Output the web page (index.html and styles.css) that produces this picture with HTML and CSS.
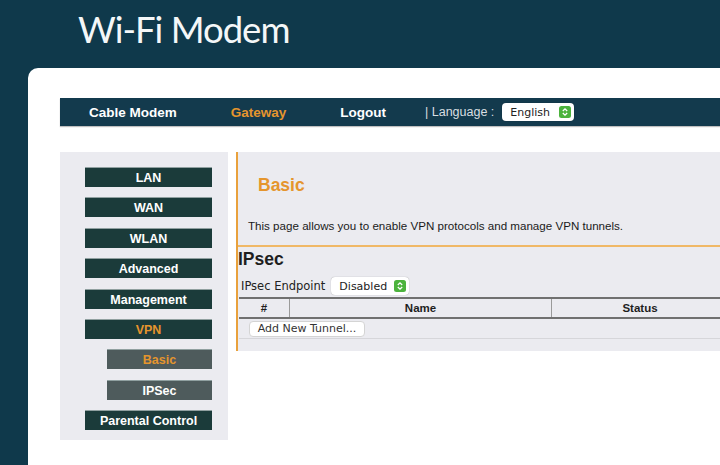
FILE: index.html
```html
<!DOCTYPE html>
<html lang="en">
<head>
  <meta charset="UTF-8">
  <title>Wi-Fi Modem</title>
  <link rel="stylesheet" href="styles.css">
</head>
<body>

  <!-- Page header -->
  <div class="header">
    <h1>Wi-Fi Modem</h1>
  </div>

  <!-- Main card -->
  <div class="card">

    <!-- Top navigation -->
    <div class="topnav">
      <a href="#" class="nav-item">Cable Modem</a>
      <a href="#" class="nav-item active">Gateway</a>
      <a href="#" class="nav-item">Logout</a>
      <span class="lang-label">| Language :</span>
      <span class="select-box lang-select">
        English
        <svg class="select-arrow" viewBox="0 0 12 12" width="12" height="12">
          <rect x="0" y="0" width="12" height="12" rx="2.5" fill="#4cb33d"/>
          <path d="M3.8 5 L6 2.9 L8.2 5 M3.8 7 L6 9.1 L8.2 7" fill="none" stroke="#fff" stroke-width="1.3"/>
        </svg>
      </span>
    </div>

    <div class="main">
      <!-- Side menu -->
      <div class="sidebar">
        <a href="#" class="side-btn">LAN</a>
        <a href="#" class="side-btn">WAN</a>
        <a href="#" class="side-btn">WLAN</a>
        <a href="#" class="side-btn">Advanced</a>
        <a href="#" class="side-btn">Management</a>
        <a href="#" class="side-btn active">VPN</a>
        <a href="#" class="side-btn sub active">Basic</a>
        <a href="#" class="side-btn sub">IPSec</a>
        <a href="#" class="side-btn">Parental Control</a>
      </div>

      <!-- Content -->
      <div class="content">
        <div class="intro">
          <h2>Basic</h2>
          <p>This page allows you to enable VPN protocols and manage VPN tunnels.</p>
        </div>

        <div class="ipsec">
          <h3>IPsec</h3>
          <div class="endpoint">
            <span class="endpoint-label">IPsec Endpoint</span>
            <span class="select-box">
              Disabled
              <svg class="select-arrow" viewBox="0 0 12 12" width="12" height="12">
                <rect x="0" y="0" width="12" height="12" rx="2.5" fill="#4cb33d"/>
                <path d="M3.8 5 L6 2.9 L8.2 5 M3.8 7 L6 9.1 L8.2 7" fill="none" stroke="#fff" stroke-width="1.3"/>
              </svg>
            </span>
          </div>

          <table class="tunnels">
            <thead>
              <tr>
                <th class="col-num">#</th>
                <th class="col-name">Name</th>
                <th class="col-status">Status</th>
              </tr>
            </thead>
            <tbody>
              <tr>
                <td colspan="3"><button class="add-btn">Add New Tunnel...</button></td>
              </tr>
            </tbody>
          </table>
        </div>
      </div>
    </div>
  </div>

</body>
</html>
```

FILE: styles.css
```css
/* General Styles */
body {
  margin: 0;
  background-color: #0f394b;
  font-family: "Liberation Sans", Arial, sans-serif;
  height: 100vh;
  overflow: hidden;
}

a {
  text-decoration: none;
}

/* Header */
.header {
  height: 68px;
  padding-left: 78px;
  box-sizing: border-box;
}

.header h1 {
  margin: 0;
  padding-top: 6px;
  font-family: Lato, "Open Sans", sans-serif;
  font-weight: 400;
  font-size: 36.5px;
  letter-spacing: -1px;
  line-height: 46px;
  color: #f4f7f8;
}

/* Card */
.card {
  margin-left: 28px;
  background-color: #ffffff;
  border-top-left-radius: 10px;
  padding: 30px 0 0 32px;
  height: calc(100vh - 68px);
  box-sizing: border-box;
  overflow: hidden;
}

/* Top navigation */
.topnav {
  height: 28px;
  background-color: #133a4d;
  display: flex;
  align-items: center;
  padding-left: 29px;
  box-shadow: 0 1px 1px rgba(0, 0, 0, 0.25);
}

.nav-item {
  font-weight: bold;
  font-size: 13.5px;
  color: #ffffff;
  margin-right: 54px;
}

.nav-item.active {
  color: #e5952d;
}

.nav-item:nth-child(3) {
  margin-right: 39px;
}

.lang-label {
  font-size: 12.5px;
  color: #d9dfe2;
  margin-right: 8px;
}

.select-box {
  display: inline-flex;
  align-items: center;
  justify-content: space-between;
  height: 18px;
  padding: 0 3px 0 8px;
  background-color: #ffffff;
  border-radius: 4px;
  box-sizing: border-box;
  font-family: "DejaVu Sans", Verdana, sans-serif;
  font-size: 11px;
  color: #222;
  box-shadow: 0 0 1px rgba(0, 0, 0, 0.4);
}

.lang-select {
  width: 72px;
}

.select-arrow {
  display: block;
}

/* Main area */
.main {
  display: flex;
  align-items: flex-start;
  margin-top: 26px;
}

/* Side menu */
.sidebar {
  width: 168px;
  flex-shrink: 0;
  background-color: #ebebf0;
  padding: 15px 16px 10px 25px;
  box-sizing: border-box;
  display: flex;
  flex-direction: column;
  gap: 10.4px;
}

.side-btn {
  display: block;
  height: 20px;
  line-height: 20px;
  background-color: #1b3b3a;
  color: #ffffff;
  font-weight: bold;
  font-size: 12.5px;
  text-align: center;
  border-top: 1px solid #90a0a0;
  box-sizing: border-box;
}

.side-btn.active {
  color: #e5952d;
}

.side-btn.sub {
  margin-left: 22px;
  background-color: #4e5b5c;
}

/* Content */
.content {
  margin-left: 8px;
  width: 500px;
  flex-shrink: 0;
  background-color: #ebebf0;
  border-left: 2px solid #e9a13c;
  padding-bottom: 12px;
}

.intro {
  padding: 23px 10px 12px;
  border-bottom: 2px solid #f0b866;
}

.intro h2 {
  margin: 0 0 24px 10px;
  height: 20px;
  line-height: 20px;
  font-size: 17.5px;
  color: #e5952d;
}

.intro p {
  margin: 0;
  line-height: 14px;
  font-size: 11.6px;
  color: #1a1a1a;
}

.ipsec h3 {
  margin: 0;
  height: 24px;
  line-height: 24px;
  font-size: 17.5px;
  color: #1e1e1e;
}

.endpoint {
  display: flex;
  align-items: center;
  margin: 6px 0 2px 3px;
}

.endpoint-label {
  font-family: "DejaVu Sans", Verdana, sans-serif;
  font-size: 11.5px;
  color: #222;
  margin-right: 6px;
}

.endpoint .select-box {
  width: 78px;
}

/* Tunnel table */
.tunnels {
  width: 490px;
  margin-left: 1px;
  border-collapse: collapse;
}

.tunnels th {
  height: 18px;
  padding: 0;
  font-size: 11.5px;
  color: #1e1e1e;
  border-top: 2px solid #707070;
  border-bottom: 2px solid #707070;
  border-right: 1px solid #9a9a9a;
}

.col-num {
  width: 50px;
}

.col-name {
  width: 261px;
}

.tunnels td {
  height: 19px;
  padding: 0 0 0 10px;
  border-bottom: 1px solid #d6d6da;
}

.add-btn {
  height: 16px;
  width: 116px;
  padding: 0;
  background-color: #ffffff;
  border: 1px solid #d4d4d4;
  border-radius: 4px;
  font-family: "DejaVu Sans", Verdana, sans-serif;
  font-size: 11px;
  color: #333;
  display: block;
}
```
